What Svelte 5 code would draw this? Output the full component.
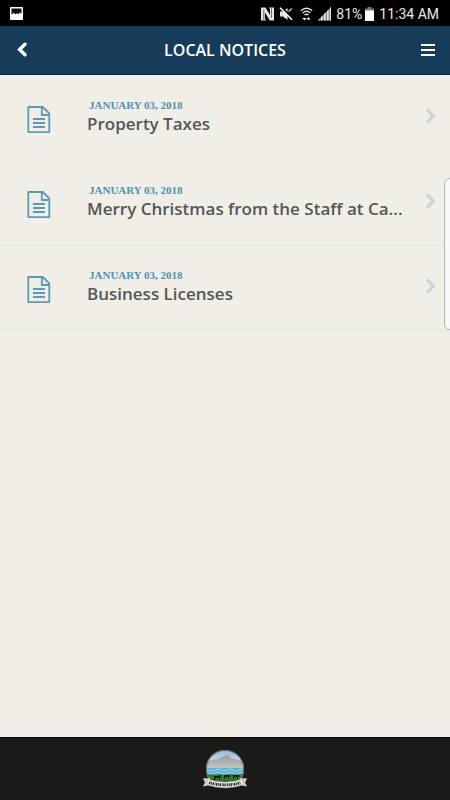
<script>
  const notices = [
    { date: 'January 03, 2018', title: 'Property Taxes' },
    { date: 'January 03, 2018', title: 'Merry Christmas from the Staff at Ca...' },
    { date: 'January 03, 2018', title: 'Business Licenses' }
  ];
</script>

<div class="app">
  <div class="status">
    <svg class="photo" viewBox="0 0 13 13" width="13" height="13" aria-hidden="true">
      <rect width="13" height="13" rx="1" fill="#fff" />
      <path d="M1.5 1.5h10v5.2L9.8 5.4 8.4 7.2 7 6.2 5.4 7.6 3.8 5.8 1.5 7.8z" fill="#111" />
    </svg>
    <svg class="nfc" viewBox="0 0 13 14" width="13" height="14" aria-hidden="true">
      <path d="M0 .5h4.5L9 8V2.5L8 .5h5v13H8.8L4 5.5v6l1 2H0z" fill="#e4e4e4" />
      <path d="M2.8 13V2.5M10.4 1v10" stroke="#333" stroke-width=".7" />
    </svg>
    <svg class="mute" viewBox="0 0 14 14" width="14" height="14" aria-hidden="true">
      <path d="M1 4.5h3L8.5 1v12L4 9.5H1z" fill="#e4e4e4" />
      <path d="M9.5 4.5L13 1.5" stroke="#ccc" stroke-width="1.4" />
      <path d="M2 0l12 12" stroke="#000" stroke-width="2" />
      <path d="M1 .8l12 12" stroke="#fff" stroke-width="1.6" />
    </svg>
    <svg class="wifi" viewBox="0 0 13 14" width="13" height="14" aria-hidden="true">
      <path d="M.8 3.7q5.7-5 11.4 0M2.7 6q3.8-3.3 7.6 0M4.5 8q2-1.7 4 0" fill="none" stroke="#e4e4e4" stroke-width="1.4" />
      <path d="M4.5 13.5L2.5 11h4zM8.5 10l2 2.5h-4z" fill="#fff" />
    </svg>
    <svg class="signal" viewBox="0 0 14 14" width="14" height="14" aria-hidden="true">
      <path d="M14 0v13.5H.5z" fill="#8a8a8a" />
      <path d="M1 13.5h1.5v-1.5zM4 13.5h1.6V8.8L4 10.2zM7 13.5h1.6V5.8L7 7.2zM10 13.5h1.6V2.8L10 4.2zM13 13.5h1V0l-1 1z" fill="#e4e4e4" />
    </svg>
    <span class="percent">81%</span>
    <svg class="battery" viewBox="0 0 9 14" width="9" height="14" aria-hidden="true">
      <path d="M2.5 0h4v1.5H9V4H0V1.5h2.5z" fill="#777" />
      <path d="M0 3.5h9V14H0z" fill="#fff" />
    </svg>
    <span>11:34 AM</span>
  </div>

  <header>
    <button type="button" aria-label="Back">
      <svg viewBox="0 0 10 16" width="10" height="16" aria-hidden="true">
        <path d="M8 2.2L2.6 7.5 8 12.8" fill="none" stroke="#fff" stroke-width="3.4" stroke-linecap="round" />
      </svg>
    </button>
    <h1>LOCAL NOTICES</h1>
    <button type="button" aria-label="Menu">
      <svg viewBox="0 0 14 12" width="14" height="12" aria-hidden="true">
        <path d="M0 1h14M0 6h14M0 11h14" stroke="#fff" stroke-width="2" />
      </svg>
    </button>
  </header>

  <main>
    <ul>
      {#each notices as notice}
        <li>
          <a href="#notice">
            <svg class="doc" viewBox="0 0 24 28" width="24" height="28" aria-hidden="true">
              <path d="M1.3 1h14.5l6.5 6.5v18.6H1.3zM14.8 1v8h7.5M6 13h12M6 17h12M6 21h12" fill="none" stroke="#5d9bb5" stroke-width="1.8" stroke-linejoin="round" />
            </svg>
            <span class="text">
              <span class="date">{notice.date}</span>
              <span class="title">{notice.title}</span>
            </span>
            <svg class="go" viewBox="0 0 10 16" width="10" height="16" aria-hidden="true">
              <path d="M2.2 2.7L7.2 8l-5 5.3" fill="none" stroke="#d3d3d3" stroke-width="3.4" stroke-linecap="square" />
            </svg>
          </a>
        </li>
      {/each}
    </ul>
  </main>

  <footer>
    <svg viewBox="0 0 44 42" width="44" height="42" role="img" aria-label="Town crest">
      <defs>
        <clipPath id="crest"><circle cx="22" cy="20" r="19" /></clipPath>
        <linearGradient id="sky" x1="0" y1="0" x2="0" y2="1">
          <stop offset="0" stop-color="#8fb4dc" />
          <stop offset="1" stop-color="#dfe8ee" />
        </linearGradient>
        <linearGradient id="hills" x1="0" y1="0" x2="0" y2="1">
          <stop offset="0" stop-color="#9a9f9f" />
          <stop offset="1" stop-color="#c3c7c4" />
        </linearGradient>
      </defs>
      <g clip-path="url(#crest)">
        <rect width="44" height="17" fill="url(#sky)" />
        <path d="M0 14l8-3 7-1 3-2h2l1-1.5h5L27.500 9l6 1.500 11 3v6H0z" fill="url(#hills)" />
        <path d="M4 15l9-2 8 1 6-2 6 2 8 1" fill="none" stroke="#aeb3b1" />
        <path d="M0 19h44v7H0z" fill="#5eb2d6" />
        <path d="M0 21q3-2 6 0t6 0 6 0 6 0 6 0 6 0 8 0M0 24q3-2 6 0t6 0 6 0 6 0 6 0 6 0 8 0" fill="none" stroke="#b5e0ea" stroke-width=".8" />
        <path d="M0 25.500h44V42H0z" fill="#35752f" />
        <path d="M3 25q2 5 7 8M41 25q-2 5-7 8" fill="none" stroke="#b5a63f" stroke-width="2" />
        <path d="M11 27h5l1-2 1 2-1 2v2h-1v-2h-3l-1 2h-1zM21 26h6l1 1-2 1v2h-1v-2h-3v2h-1zM30 26h6l1 1-2 1v2h-1v-2h-3v2h-1z" fill="#0f2414" />
        <path d="M12 32h20v8H12z" fill="#28442a" />
      </g>
      <circle cx="22" cy="20" r="18.500" fill="none" stroke="#6d7372" />
      <path d="M0 29.500l7-.5v7l-7 1.500 2-4zM44 29.500l-7-.5v7l7 1.500-2-4z" fill="#d8d8d6" />
      <path d="M4 30q18 6 36 0v6q-18 6-36 0z" fill="#f3f3f1" stroke="#77796f" stroke-width=".5" />
      <path d="M6 33.600q16 4.600 32 0" fill="none" stroke="#2d2d2b" stroke-width="3" stroke-dasharray="1.500 .7 .8 .6" />
    </svg>
  </footer>

  <div class="edge"></div>
</div>

<style>
  :global(body) {
    margin: 0;
    background: #f1eee7;
  }

  .app {
    position: relative;
    display: flex;
    flex-direction: column;
    min-height: 100vh;
    overflow: hidden;
    font-family: "Open Sans", sans-serif;
  }

  svg {
    display: block;
    flex: none;
  }

  .status {
    display: flex;
    align-items: center;
    height: 26px;
    padding: 1px 11px 0 10px;
    box-sizing: border-box;
    background: #000;
    color: #e8e8e8;
    font: 14px/24px Roboto, sans-serif;
    white-space: nowrap;
  }
  .photo { margin-right: auto; }
  .nfc { margin-right: 5px; }
  .mute { margin-right: 7px; }
  .wifi { margin-right: 4px; }
  .signal { margin-right: 5px; }
  .battery { margin: 0 5px 0 3px; }

  header {
    display: flex;
    align-items: center;
    justify-content: space-between;
    height: 49px;
    padding: 0 7px;
    box-sizing: border-box;
    background: #173c59;
    border-bottom: 1px solid #071f52;
  }
  header button {
    display: grid;
    place-items: center;
    width: 30px;
    height: 40px;
    padding: 0;
    border: 0;
    background: none;
    cursor: pointer;
  }

  h1 {
    margin: 0;
    color: #fff;
    font-size: 16px;
    line-height: 24px;
    font-weight: 600;
  }

  main { flex: 1; }

  ul {
    margin: 0;
    padding: 1px 0 0;
    list-style: none;
  }

  li { border-bottom: 2px solid #e8e8e5; }

  a {
    display: flex;
    align-items: flex-start;
    padding: 22px 14px 24px 27px;
    color: #555657;
    text-decoration: none;
  }

  .doc { margin: 8px 36px 0 0; }
  .go { margin-top: 10px; }

  .text {
    flex: 1;
    min-width: 0;
  }

  .date,
  .title {
    display: block;
    overflow: hidden;
    white-space: nowrap;
    text-overflow: ellipsis;
  }

  .date {
    padding-left: 2px;
    color: #4d93b0;
    font: 11px/15px "Liberation Serif", serif;
    font-weight: 700;
    text-transform: uppercase;
  }

  .title {
    font-size: 17px;
    line-height: 22px;
    font-weight: 600;
  }

  footer {
    display: flex;
    justify-content: center;
    padding: 11px 0 9px;
    background: #1b1a18;
    border-top: 1px solid #0b0a09;
  }

  .edge {
    position: absolute;
    top: 178px;
    right: -8px;
    width: 12px;
    height: 150px;
    border: 1px solid #b5b3b0;
    border-radius: 6px;
    background: #f9f9f9;
  }
</style>
